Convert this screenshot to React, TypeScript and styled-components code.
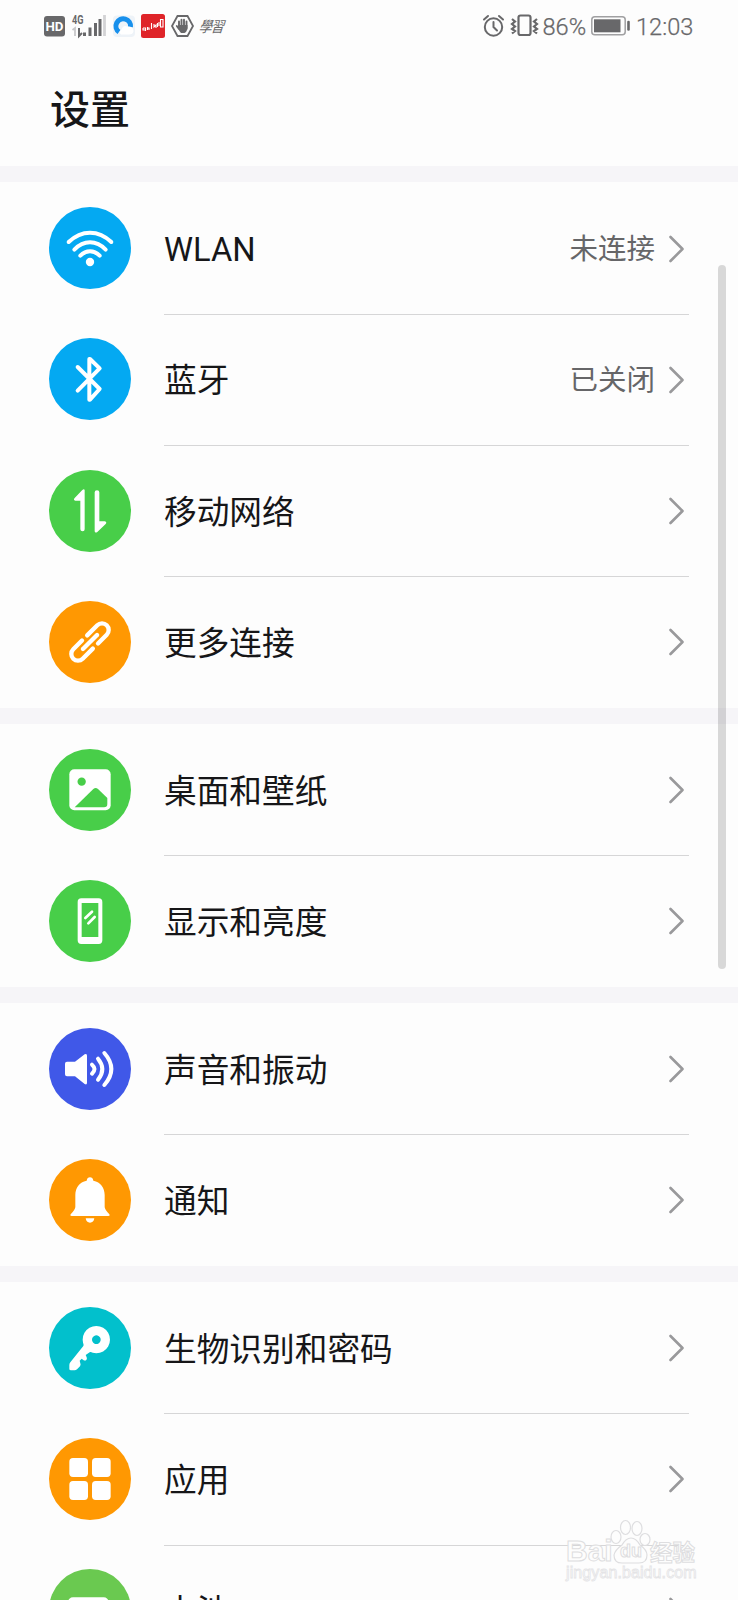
import React from 'react';
import styled, { createGlobalStyle } from 'styled-components';

const GlobalStyle = createGlobalStyle`
  html, body { margin: 0; padding: 0; height: 1600px; overflow: hidden; background: #fdfdfd; }
  * { box-sizing: border-box; }
`;

const Screen = styled.div`
  position: relative;
  width: 738px;
  height: 1600px;
  overflow: hidden;
  background: #fdfdfd;
  color: #161618;
  font-family: Roboto, 'Noto Sans CJK SC', sans-serif;
`;

const StatusBar = styled.header`
  display: flex;
  align-items: center;
  justify-content: space-between;
  height: 52px;
  padding: 0 45px 0 44px;
  color: #68686a;
`;

const StatusGroup = styled.div`
  display: flex;
  align-items: center;
`;

const StatusIcon = styled.svg<{ $w: number; $gap?: number }>`
  display: block;
  flex: none;
  width: ${p => p.$w}px;
  height: 28px;
  margin-right: ${p => p.$gap ?? 0}px;
  overflow: visible;
`;

const StudyMark = styled.span`
  font: italic 400 13px/20px 'Noto Sans CJK TC', sans-serif;
  transform: skewX(-6deg) scaleY(1.15);
  letter-spacing: -0.8px;
  white-space: nowrap;
`;

const StatusText = styled.span<{ $w: number; $gap?: number }>`
  width: ${p => p.$w}px;
  font-size: 23.6px;
  line-height: 28px;
  padding-top: 1px;
  font-weight: 300;
  margin-right: ${p => p.$gap ?? 0}px;
  white-space: nowrap;
  -webkit-text-stroke: 0.25px #68686a;
`;

const TitleBar = styled.div`
  height: 114px;
  padding: 4px 0 0 50px;
  display: flex;
  align-items: center;
`;

const Title = styled.h1`
  margin: 0;
  font-size: 40px;
  line-height: 60px;
  font-weight: 500;
`;

const Section = styled.section`
  padding-top: 16.4px;
  background: #f6f5f8;
`;

const Row = styled.div`
  display: flex;
  align-items: center;
  height: 131.3px;
  padding-left: 49px;
  background: #fdfdfd;
`;

const Badge = styled.div<{ $color: string }>`
  flex: none;
  width: 82px;
  height: 82px;
  border-radius: 50%;
  background: ${p => p.$color};
  margin-right: 33px;
  svg { display: block; width: 82px; height: 82px; }
`;

const RowBody = styled.div<{ $divided: boolean }>`
  display: flex;
  align-items: center;
  width: 525px;
  height: 131.3px;
  padding-right: 5px;
  border-top: 1px solid ${p => (p.$divided ? '#d6d6d7' : 'transparent')};
`;

const Label = styled.span`
  flex: 1;
  padding-top: 3px;
  font-size: 32.7px;
  line-height: 48px;
  white-space: nowrap;
`;

const Value = styled.span`
  padding-top: 3px;
  font-size: 28.5px;
  line-height: 42px;
  color: #666668;
  margin-right: 14px;
`;

const Chevron = styled.svg`
  display: block;
  width: 15px;
  height: 28px;
  fill: none;
  stroke: #99999b;
  stroke-width: 2.6;
  stroke-linecap: round;
  stroke-linejoin: round;
`;

const ScrollThumb = styled.div`
  position: absolute;
  top: 265px;
  left: 718px;
  width: 8px;
  height: 704px;
  border-radius: 4px;
  background: rgba(0, 0, 0, 0.145);
`;

const Watermark = styled.div`
  position: absolute;
  left: 566px;
  top: 1518px;
  width: 136px;
  color: #fdfdfd;
  font-family: 'Liberation Sans', 'Noto Sans CJK SC', sans-serif;
`;

const WatermarkLine = styled.div`
  display: flex;
  align-items: center;
  height: 46px;
  padding-top: 20px;
  font-weight: 700;
  font-size: 30px;
  -webkit-text-stroke: 1px #dedee0;
`;

const WatermarkName = styled.span`
  width: 46px;
`;

const Paw = styled.svg`
  position: absolute;
  left: 44px;
  top: 0;
  width: 42px;
  height: 46px;
  fill: #fdfdfd;
  stroke: #dedee0;
  stroke-width: 1.2;
`;

const PawText = styled.span`
  position: relative;
  width: 38px;
  font-size: 18px;
  text-align: center;
`;

const WatermarkCjk = styled.span`
  font-size: 22.5px;
  white-space: nowrap;
`;

const WatermarkUrl = styled.div`
  font-size: 16px;
  line-height: 18px;
  letter-spacing: 0.1px;
  -webkit-text-stroke: 0.8px #e4e4e6;
`;

const Glyph = ({ children }: { children: React.ReactNode }) => (
  <svg viewBox="0 0 246 246" fill="none" strokeLinecap="round" strokeLinejoin="round">
    {children}
  </svg>
);

const icons: Record<string, React.ReactNode> = {
  wlan: (
    <Glyph>
      <g stroke="#fff" strokeWidth="12">
        <path d="M59 105Q88 77 123 77T187 105" />
        <path d="M76 128Q97 106 123 106T170 128" />
        <path d="M94 146Q107 133 123 133T152 146" />
      </g>
      <circle cx="123" cy="165" r="12.5" fill="#fff" />
    </Glyph>
  ),
  bluetooth: (
    <Glyph>
      <path d="M86 87L152 153L123 185H121V63H123L152 91L86 158" stroke="#fff" strokeWidth="12" />
    </Glyph>
  ),
  mobile: (
    <Glyph>
      <g fill="#fff">
        <path d="M107 61V178Q107 184 101 184Q94 184 94 178V92H79Q72 90 77 84L100 60Q106 55 107 61Z" />
        <path d="M137 184V67Q137 61 144 61Q151 61 151 67V154H167Q175 156 170 162L145 186Q138 190 137 184Z" />
      </g>
    </Glyph>
  ),
  link: (
    <Glyph>
      <g transform="translate(123 123) rotate(-45)" stroke="#fff" strokeWidth="13">
        <path d="M8 -20H51A20 20 0 0 1 51 20H14" />
        <path d="M-8 20H-51A20 20 0 0 1 -51 -20H-14" />
        <path d="M-30 0H30" />
      </g>
    </Glyph>
  ),
  picture: (
    <Glyph>
      <rect x="61" y="61" width="124" height="123" rx="15" fill="#fff" />
      <g fill="#48ce49">
        <circle cx="98" cy="98" r="12.500" />
        <path d="M77 175L133 120Q140 114 147 120L175 147V165Q175 175 165 175Z" />
      </g>
    </Glyph>
  ),
  display: (
    <Glyph>
      <path
        fill="#fff"
        fillRule="evenodd"
        d="M97 55H149Q160 55 160 66V181Q160 192 149 192H97Q86 192 86 181V66Q86 55 97 55ZM98 69V171H148V69Z"
      />
      <path d="M109 114L129 95M118 130L137 111" stroke="#fff" strokeWidth="8" />
    </Glyph>
  ),
  sound: (
    <Glyph>
      <path
        d="M54 101H78L107 79Q114 75 114 83V164Q114 172 107 168L78 145H54Q48 145 48 139V107Q48 101 54 101Z"
        fill="#fff"
      />
      <path
        d="M129 110Q144 123 129 137M147 92Q173 123 147 155M166 75Q208 123 166 171"
        stroke="#fff"
        strokeWidth="12"
      />
    </Glyph>
  ),
  bell: (
    <Glyph>
      <g fill="#fff">
        <path d="M123 55Q131 55 133 65C155 69 167 86 167 108V144Q167 151 181 166Q184 171 178 171H68Q62 171 65 166Q79 151 79 144V108C79 86 91 69 113 65Q115 55 123 55Z" />
        <path d="M110 178H136Q134 191 123 191T110 178Z" />
      </g>
    </Glyph>
  ),
  key: (
    <Glyph>
      <g fill="#fff">
        <path
          fillRule="evenodd"
          d="M142 57A41 41 0 1 1 141.900 57ZM142 85A13 13 0 1 0 142.100 85Z"
        />
        <path d="M103 117L64 166Q61 169 61 174V186Q61 190 66 190H77Q81 190 84 187L93 178Q96 174 94 169L92 161L98 155L104 160Q109 162 112 159Q115 156 113 151L110 144L122 136L132 133L108 100Z" />
      </g>
    </Glyph>
  ),
  apps: (
    <Glyph>
      <g fill="#fff">
        <rect x="61" y="60" width="56" height="57" rx="11" />
        <rect x="129" y="60" width="56" height="57" rx="11" />
        <rect x="61" y="129" width="56" height="57" rx="11" />
        <rect x="129" y="129" width="56" height="57" rx="11" />
      </g>
    </Glyph>
  ),
  battery: (
    <Glyph>
      <rect x="57" y="85" width="122" height="76" rx="15" fill="#fff" />
    </Glyph>
  ),
};

interface Item {
  icon: string;
  color: string;
  label: string;
  value?: string;
}

const BLUE = '#04a9f2';
const GREEN = '#48ce49';
const ORANGE = '#ff9802';

const sections: Item[][] = [
  [
    { icon: 'wlan', color: BLUE, label: 'WLAN', value: '未连接' },
    { icon: 'bluetooth', color: BLUE, label: '蓝牙', value: '已关闭' },
    { icon: 'mobile', color: GREEN, label: '移动网络' },
    { icon: 'link', color: ORANGE, label: '更多连接' },
  ],
  [
    { icon: 'picture', color: GREEN, label: '桌面和壁纸' },
    { icon: 'display', color: GREEN, label: '显示和亮度' },
  ],
  [
    { icon: 'sound', color: '#4058e8', label: '声音和振动' },
    { icon: 'bell', color: ORANGE, label: '通知' },
  ],
  [
    { icon: 'key', color: '#02c0cc', label: '生物识别和密码' },
    { icon: 'apps', color: ORANGE, label: '应用' },
    { icon: 'battery', color: '#6ac950', label: '电池' },
  ],
];

const SvgText = styled.text`
  font-family: Roboto, sans-serif;
  font-weight: 700;
`;

export default function App() {
  return (
    <>
      <GlobalStyle />
      <Screen>
        <StatusBar>
          <StatusGroup>
            <StatusIcon $w={21} $gap={7} viewBox="0 0 21 28">
              <rect y="4" width="21" height="20.500" rx="3" fill="#68686a" />
              <SvgText x="1.5" y="19" fontSize="13.500" fill="#fff" textLength="18" lengthAdjust="spacingAndGlyphs">HD</SvgText>
            </StatusIcon>
            <StatusIcon $w={34} $gap={7} viewBox="0 0 34 28">
              <SvgText x="0" y="12" fontSize="12.500" fill="#68686a" textLength="11.500" lengthAdjust="spacingAndGlyphs">4G</SvgText>
              <path d="M0.500 18L3 16V24" fill="none" stroke="#c8c8ca" strokeWidth="1.800" />
              <path d="M7 16V24L10 21" fill="none" stroke="#68686a" strokeWidth="2" />
              <path d="M12.500 20.500V24M18 15.500V24M23.500 11V24M28 7V24" stroke="#68686a" strokeWidth="3" />
              <path d="M32.500 3V24" stroke="#d3d3d5" strokeWidth="2.800" />
            </StatusIcon>
            <StatusIcon $w={22} $gap={6} viewBox="0 0 22 28">
              <rect y="3.500" width="22" height="21.500" rx="4" fill="#eef3f8" />
              <path d="M6 20A7.300 7.300 0 1 1 17.500 15" fill="none" stroke="#1890ec" strokeWidth="5" />
              <path d="M8 22.500Q5 20 8.500 17.500Q10 12.500 14.500 14.500Q20 14 20.500 19Q20 22.500 16 22.500Z" fill="#fff" />
            </StatusIcon>
            <StatusIcon $w={24} $gap={6} viewBox="0 0 24 28">
              <rect y="2" width="24" height="24" rx="2.500" fill="#df2429" />
              <path d="M2 16H4.500V19M2 16V18H4.500M6.500 15V18M6.500 16H8V18M10.500 11V17M13 12V15L15 13V16M16.500 11V15M18 10V14M19.500 7.500H22V15H19.500Z" stroke="#fff" strokeWidth="1.100" fill="none" />
            </StatusIcon>
            <StatusIcon $w={23} $gap={5} viewBox="0 0 23 28">
              <path d="M6.500 4H16.500L22 14L16.500 24H6.500L1 14Z" fill="none" stroke="#68686a" strokeWidth="1.800" />
              <path d="M8 9.500V15M10.500 7.800V14M13 7.800V14M15.500 9.500V16M5.800 14L8 17" stroke="#68686a" strokeWidth="1.900" strokeLinecap="round" />
              <path d="M7 13H16.500V17Q15.500 20 13.500 21H10Q8 19 7 16Z" fill="#68686a" />
            </StatusIcon>
            <StudyMark>學習</StudyMark>
          </StatusGroup>
          <StatusGroup>
            <StatusIcon $w={21} $gap={7} viewBox="0 0 21 28">
              <g fill="none" stroke="#68686a" strokeWidth="2" strokeLinecap="round">
                <circle cx="10.500" cy="15" r="8.700" />
                <path d="M10.500 10V15L14 18.500M1 7.500L5 4M20 7.500L16 4" />
              </g>
            </StatusIcon>
            <StatusIcon $w={27} $gap={5} viewBox="0 0 27 28">
              <g fill="none" stroke="#68686a" strokeWidth="2.200">
                <rect x="7.500" y="3.500" width="12" height="19.500" rx="2" />
                <path d="M1 7L4 9.500L1 12L4 14.500L1 17L4 19L1 21.500M26 7L23 9.500L26 12L23 14.500L26 17L23 19L26 21.500" />
              </g>
            </StatusIcon>
            <StatusText $w={42} $gap={6}>86%</StatusText>
            <StatusIcon $w={39} $gap={6.5} viewBox="0 0 39 28">
              <rect x="0.800" y="4.800" width="33.400" height="18" rx="3" fill="none" stroke="#a0a0a2" strokeWidth="1.500" />
              <rect x="3" y="7.300" width="26.500" height="13" fill="#68686a" />
              <path d="M37.500 10V17.500" stroke="#68686a" strokeWidth="2.600" strokeLinecap="round" />
            </StatusIcon>
            <StatusText $w={57}>12:03</StatusText>
          </StatusGroup>
        </StatusBar>
        <TitleBar>
          <Title>设置</Title>
        </TitleBar>
        {sections.map((items, s) => (
          <Section key={s}>
            {items.map((item, i) => (
              <Row key={item.label}>
                <Badge $color={item.color}>{icons[item.icon]}</Badge>
                <RowBody $divided={i > 0}>
                  <Label>{item.label}</Label>
                  {item.value && <Value>{item.value}</Value>}
                  <Chevron viewBox="0 0 15 28">
                    <path d="M1.500 2L13.500 14L1.500 26" />
                  </Chevron>
                </RowBody>
              </Row>
            ))}
          </Section>
        ))}
        <ScrollThumb />
        <Watermark>
          <WatermarkLine>
            <WatermarkName>Bai</WatermarkName>
            <Paw viewBox="0 0 42 46">
              <ellipse cx="6" cy="19" rx="5" ry="6.500" />
              <ellipse cx="15.500" cy="9.500" rx="5" ry="7" />
              <ellipse cx="27" cy="10.500" rx="5" ry="7" />
              <ellipse cx="35" cy="21.500" rx="5" ry="6" />
              <path d="M21 20Q26 20 30 27Q37 32 37 37Q37 45 29 45H12Q4 45 4 37Q5 32 12 27Q16 20 21 20Z" />
            </Paw>
            <PawText>du</PawText>
            <WatermarkCjk>经验</WatermarkCjk>
          </WatermarkLine>
          <WatermarkUrl>jingyan.baidu.com</WatermarkUrl>
        </Watermark>
      </Screen>
    </>
  );
}
